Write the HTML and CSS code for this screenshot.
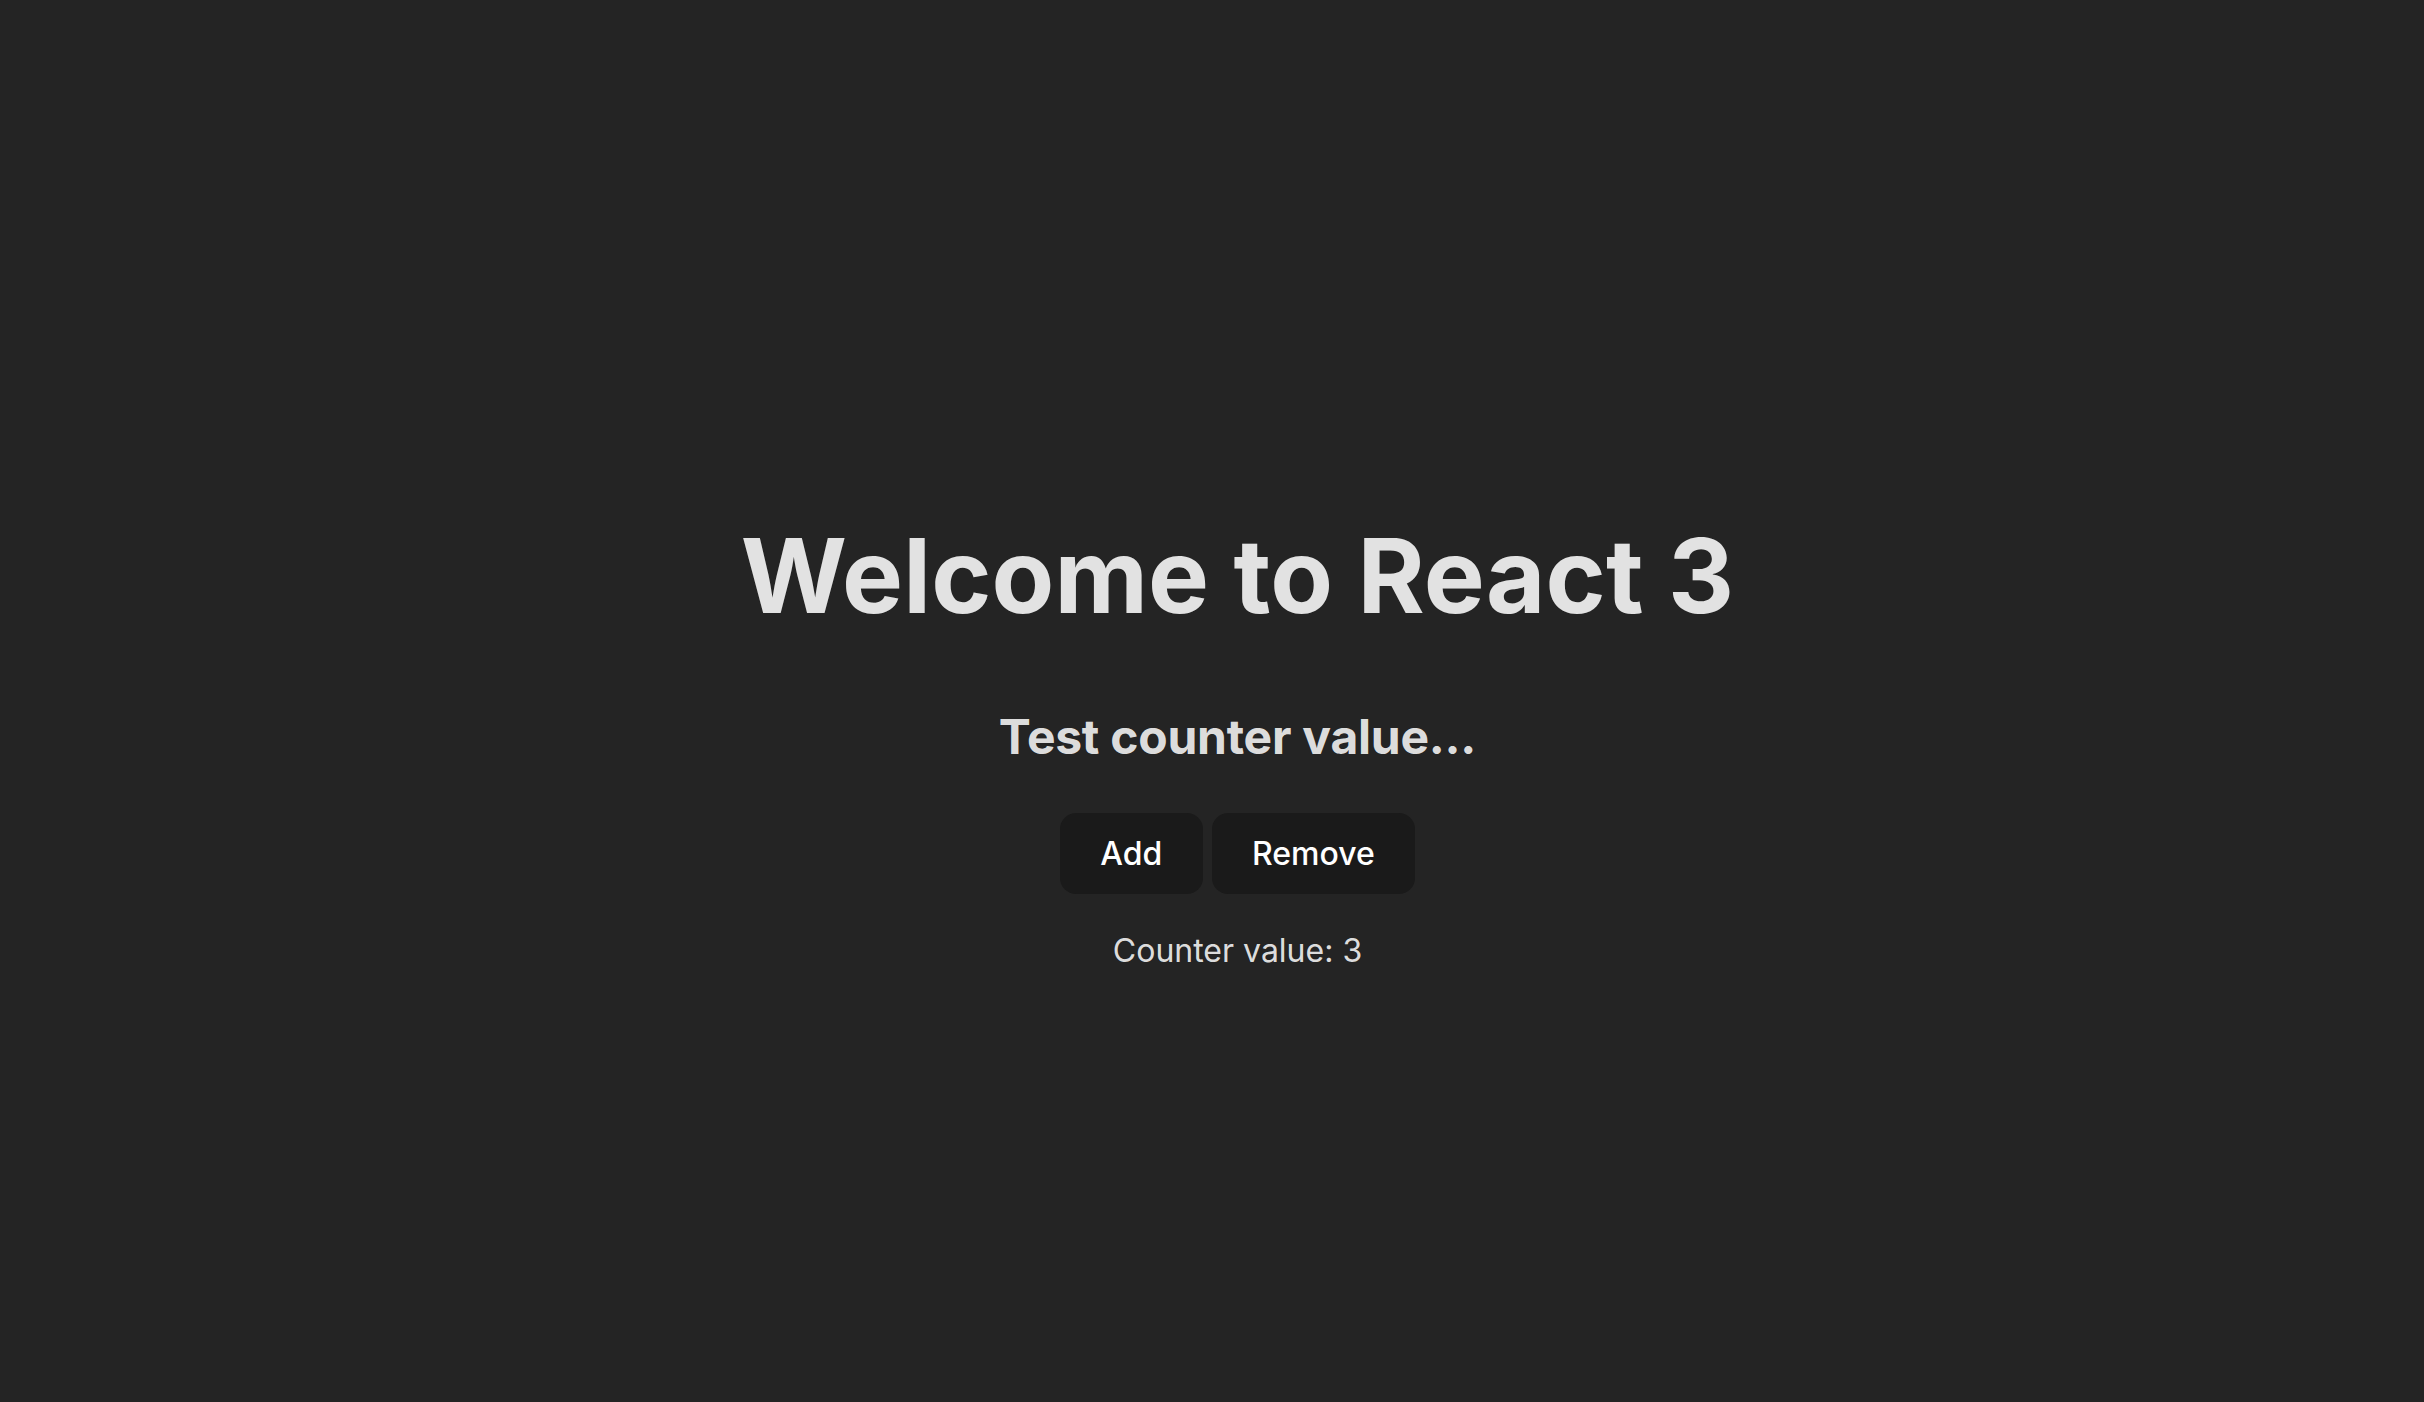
FILE: index.html
```html
<!DOCTYPE html>
<html lang="en">
<head>
<meta charset="UTF-8">
<title>React App</title>
<link rel="stylesheet" href="styles.css">
</head>
<body>
<div class="root">
  <h1 class="title">Welcome to React 3</h1>
  <h2 class="subtitle">Test counter value...</h2>
  <div class="actions">
    <button class="btn" type="button">Add</button>
    <button class="btn" type="button">Remove</button>
  </div>
  <p class="counter">Counter value: 3</p>
</div>
</body>
</html>
```

FILE: styles.css
```css
html {
  background: #242424;
}
body {
  margin: 0;
  min-height: 100vh;
  box-sizing: border-box;
  padding: 56px 0 0 51px;
  display: flex;
  align-items: center;
  justify-content: center;
  background: #242424;
  color: rgba(255, 255, 255, 0.87);
  font-family: Inter, "Noto Sans", sans-serif;
  font-size: 32px;
  line-height: 1.5;
  font-weight: 400;
}
.root {
  padding: 64px;
  text-align: center;
}
.title {
  font-size: 102.4px;
  line-height: 1.1;
  font-weight: 700;
  letter-spacing: 0.15px;
  margin: 68.6px 0;
}
.subtitle {
  font-size: 48px;
  font-weight: 700;
  letter-spacing: -0.25px;
  margin: 39.84px 0;
}
.actions {
  display: flex;
  justify-content: center;
  gap: 9px;
}
.btn {
  border-radius: 16px;
  border: 2px solid transparent;
  padding: 19.2px 38.4px;
  font-size: 32px;
  font-weight: 500;
  font-family: inherit;
  line-height: normal;
  background-color: #1a1a1a;
  color: #fff;
  cursor: pointer;
}
.counter {
  margin: 33px 0 32px;
}
```
